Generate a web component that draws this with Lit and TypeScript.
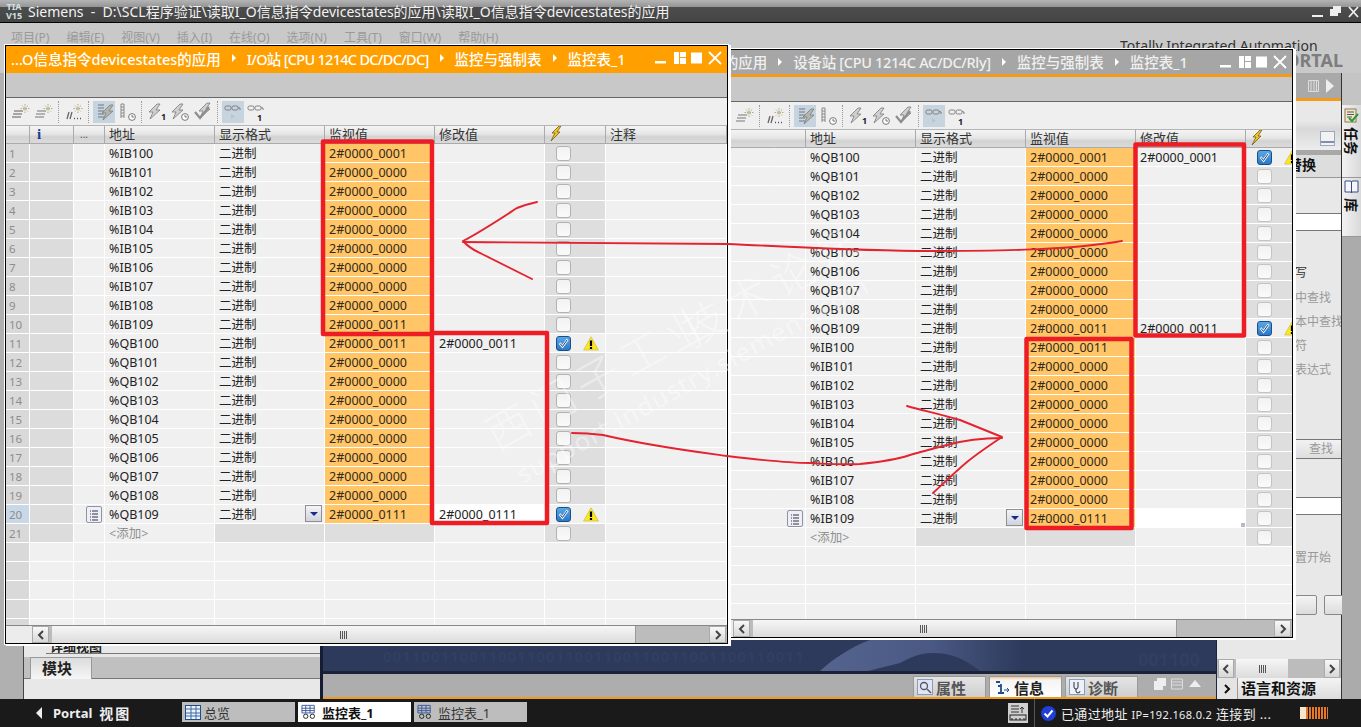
import { LitElement, css, html, svg } from 'lit'
import { classMap } from 'lit/directives/class-map.js'
import { customElement, property } from 'lit/decorators.js'

interface WatchRow {
  address: string
  value: string
  modify?: string
  forced?: boolean
  editing?: boolean
}

const ZERO = '2#0000_0000'

function buildRows(first: string, second: string, values: Record<number, string>, modify: Record<number, string>): WatchRow[] {
  const rows: WatchRow[] = []
  for (let i = 0; i < 20; i++) {
    const prefix = i < 10 ? first : second
    const m = modify[i]
    rows.push({
      address: `%${prefix}${100 + (i % 10)}`,
      value: values[i] ?? ZERO,
      modify: m,
      forced: !!m,
      editing: i === 19,
    })
  }
  return rows
}

const lightning = (x: number, y: number, c: string) =>
  svg`<path d="M${x + 8} ${y}L${x} ${y + 8}h4l-3 7L${x + 11} ${y + 6}h-4l4-6z" fill="${c}" stroke="#7c7c7c" stroke-width=".8"/>`

const spark = svg`<path d="M15 3v9M10.500 7.500h9M12 4.500l6 6M18 4.500l-6 6" stroke="#b5ad82" stroke-width="1" stroke-dasharray="1.500 1"/>`

const clock = svg`<circle cx="16" cy="16" r="3.400" fill="#fff" stroke="#777"/><path d="M16 14v2h2" fill="none" stroke="#555" stroke-width=".8"/>`

const glasses = svg`<rect x="3" y="5" width="6" height="4" rx="1.500" fill="none" stroke="#777" stroke-width=".9"/><rect x="10" y="5" width="6" height="4" rx="1.500" fill="none" stroke="#777" stroke-width=".9"/><path d="M16 6.500l2 .5v2" fill="none" stroke="#777" stroke-width=".9"/>`

const TOOL_ICONS = {
  monitorAll: svg`<path d="M4 10h9M3 13h9M2 16h9" stroke="#8f8f8f" stroke-width="1.600"/>${spark}`,
  monitorSel: svg`<path d="M4 10h9M3 13h9M2 16h9" stroke="#a0a0a0" stroke-width="1.600"/>${spark}`,
  restart: svg`<path d="M4 18l2-7M7 18l2-7" stroke="#666" stroke-width="1.300"/><path d="M11 17.500h1M14 17.500h1M17 17.500h1" stroke="#555" stroke-width="1.300"/>${spark}`,
  listBolt: svg`<path d="M5 4h6M5 7h6M5 10h6M5 13h6M5 16h6" stroke="#8a97a3" stroke-width="1.400"/>${lightning(9, 4, '#b4b6ac')}`,
  listClock: svg`<path d="M5 3v14M8 3v14M5 3h3M5 6h3M5 9h3M5 12h3M5 15h3" stroke="#888" fill="none"/>${clock}`,
  bolt1: svg`${lightning(3, 3, '#cfcfcf')}<text x="15" y="19" font-size="9" font-weight="700" fill="#222">1</text>`,
  boltClock: svg`${lightning(3, 3, '#cfcfcf')}${clock}`,
  boltCheck: svg`${lightning(7, 2, '#cfcfcf')}<path d="M3 11l5 6 9-11" fill="none" stroke="#8d8d8d" stroke-width="2.200"/>`,
  glassPlay: svg`${glasses}<path d="M9 13v5l4-2.500z" fill="#b8c4ce"/>`,
  glassOne: svg`${glasses}<text x="12" y="20" font-size="9" font-weight="700" fill="#222">1</text>`,
}

const toolIcon = (name: keyof typeof TOOL_ICONS, active = false) =>
  html`<span class=${classMap({ tool: true, active })}
    ><svg width="22" height="22" viewBox="0 0 22 22">${TOOL_ICONS[name]}</svg></span
  >`

@customElement('monitor-window')
export class MonitorWindow extends LitElement {
  static styles = css`
    :host {
      display: flex;
      flex-direction: column;
      box-sizing: border-box;
      border: 1px solid #000;
      box-shadow:
        0 0 0 1px #fff,
        2px 1px 0 1px #fff;
      background: #f0f0f0;
      overflow: hidden;
      color: #222;
    }
    .title {
      flex: none;
      box-sizing: border-box;
      height: 27px;
      display: flex;
      align-items: center;
      gap: 11px;
      padding: 0 0 3px 5px;
      background: #ff9f00;
      color: #fff;
      font-size: 14.5px;
      font-weight: 500;
      white-space: nowrap;
    }
    :host(.inactive) .title {
      background: #a6a6a6;
      border-bottom: 3px solid #f29a1a;
      color: #f0f0f0;
      padding-bottom: 1px;
    }
    .title .sub {
      letter-spacing: -0.7px;
    }
    :host(.inactive) .title .sub {
      letter-spacing: -0.33px;
    }
    .arrow {
      width: 0;
      height: 0;
      border-left: 4px solid #fff;
      border-top: 4px solid transparent;
      border-bottom: 4px solid transparent;
    }
    .controls {
      margin-left: auto;
      display: flex;
      gap: 5px;
      padding-right: 5px;
      align-items: center;
    }
    .controls svg {
      display: block;
    }
    .controls .min {
      margin-right: 2px;
    }
    .band {
      flex: none;
      height: 24px;
      background: #c8c8c8;
      border-bottom: 1px solid #666;
    }
    .toolbar {
      flex: none;
      height: 28px;
      display: flex;
      align-items: center;
      gap: 1px;
      padding-left: 4px;
      background: #efefef;
      border-bottom: 1px solid #b5b5b5;
      box-sizing: border-box;
    }
    .tool {
      width: 22px;
      height: 22px;
    }
    .tool.active {
      background: #c6d4e0;
    }
    .tool svg {
      display: block;
    }
    .tsep {
      width: 0;
      height: 22px;
      border-left: 1px dotted #999;
      margin: 0 3px 0 2px;
    }
    .grid {
      flex: 1;
      min-height: 0;
      overflow: hidden;
    }
    .row {
      display: grid;
      grid-template-columns: 24px 44px 31px 110px 110px 110px 110px 61px 121px;
      height: 19px;
      box-sizing: border-box;
      font-size: 12.5px;
      line-height: 18px;
    }
    .row > div {
      box-sizing: border-box;
      border-bottom: 1px solid #fff;
      border-right: 1px solid #fff;
      padding: 1px 0 0 4px;
      white-space: nowrap;
      overflow: hidden;
      display: flex;
      align-items: center;
    }
    .head {
      height: 18px;
      background: linear-gradient(#f4f4f4, #e6e6e6 45%, #d2d2d2 60%, #dcdcdc);
      font-size: 13px;
      color: #333;
    }
    .row.head > div {
      border-bottom: 1px solid #aaa;
      border-right: 1px solid #aaa;
      padding-top: 0;
      padding-bottom: 2px;
    }
    .row.head > .info {
      padding-left: 7px;
      color: #1c3d8f;
      font-weight: 700;
      font-family: 'Liberation Serif', serif;
      font-size: 15px;
    }
    .row.head > .dots {
      font-size: 10px;
      color: #555;
      padding-left: 6px;
    }
    :host(.inactive) .row.head > .info {
      color: transparent;
      border-right-color: transparent;
    }
    :host(.inactive) .row.head > .dots {
      color: transparent;
    }
    .row > .num {
      background: #d9d9d9;
      color: #8d8d8d;
      font-size: 11.5px;
      padding-left: 3px;
    }
    .num.current {
      background: #c9d8e6;
    }
    .diag {
      background: #dcdcdc;
    }
    .row.blank .diag {
      background: #f0f0f0;
    }
    .row > .diag {
      padding: 0;
    }
    :host(.inactive) .row > .diag {
      background: #f0f0f0;
      border-right-color: transparent;
    }
    .empty {
      background: #dedede;
    }
    .add {
      color: #909090;
    }
    .val {
      background: #ffc566;
      color: #33291a;
    }
    .mod {
      color: #222;
    }
    .mod.edit {
      background: #fff;
      position: relative;
    }
    .row.current-row .format {
      position: relative;
    }
    .row > .force {
      padding: 0 0 0 11px;
      gap: 12px;
      background: #dedede;
    }
    .row > .force.on {
      background: #f0f0f0;
    }
    .row.blank .force {
      background: #f0f0f0;
    }
    .box {
      flex: none;
      width: 15px;
      height: 15px;
      box-sizing: border-box;
      border: 1px solid #b3b3b3;
      border-radius: 3px;
      background: linear-gradient(#f2f2f2, #fafafa);
    }
    :host(.inactive) .box {
      border-color: #c4c4c4;
    }
    .box svg {
      display: block;
    }
    .box.on,
    :host(.inactive) .box.on {
      border: 1px solid #174f8c;
      background: linear-gradient(#5aa7e6, #2a78c8);
    }
    .warn {
      flex: none;
      display: block;
    }
    .drop {
      position: absolute;
      right: 2px;
      top: 0;
      width: 17px;
      height: 17px;
      box-sizing: border-box;
      border: 1px solid #8f8f8f;
      background: linear-gradient(#f5f5f5, #cfd3e0);
      display: flex;
      align-items: center;
      justify-content: center;
    }
    .drop::after {
      content: '';
      border-top: 4px solid #1a2a8a;
      border-left: 4px solid transparent;
      border-right: 4px solid transparent;
    }
    .pick {
      width: 16px;
      height: 17px;
      margin-left: 8px;
      box-sizing: border-box;
      border: 1px solid #8e93a8;
      border-radius: 2px;
      background: #eef0f6;
      display: flex;
      align-items: center;
      justify-content: center;
      flex: none;
    }
    .handle {
      position: absolute;
      right: 0;
      bottom: 0;
      width: 4px;
      height: 4px;
      background: #b8bcc8;
    }
    .scroll {
      flex: none;
      height: 18px;
      display: flex;
      background: #bcbcbc;
      border-top: 1px solid #888;
      box-sizing: border-box;
    }
    .scroll .pad {
      width: 26px;
      flex: none;
      background: #ececec;
    }
    .sbtn {
      flex: none;
      width: 17px;
      box-sizing: border-box;
      border: 1px solid #aaa;
      background: linear-gradient(#f8f8f8, #d8d8d8);
      display: flex;
      align-items: center;
      justify-content: center;
    }
    .thumb {
      flex: none;
      margin-left: 3px;
      box-sizing: border-box;
      border-right: 1px solid #999;
      background: linear-gradient(#f6f6f6, #dcdcdc);
      display: flex;
      align-items: center;
      justify-content: center;
    }
    .grip {
      width: 7px;
      height: 8px;
      background: repeating-linear-gradient(90deg, #555 0 1px, transparent 1px 2px);
    }
    .scroll .sbtn.end {
      margin-left: auto;
      margin-right: 1px;
    }
  `

  @property({ attribute: false }) titleParts: string[] = []
  @property({ attribute: false }) rows: WatchRow[] = []
  @property({ type: Number }) thumb = 584
  @property({ type: Number }) gripShift = 0

  private renderRow(r: WatchRow, i: number) {
    return html`<div class=${classMap({ row: true, 'current-row': !!r.editing })}>
      <div class=${classMap({ num: true, current: !!r.editing })}>${i + 1}</div>
      <div class="diag"></div>
      <div>
        ${r.editing
          ? html`<span class="pick"
              ><svg width="10" height="12" viewBox="0 0 10 12">
                <path d="M1 2h1M1 5h1M1 8h1M1 11h1M3 2h6M3 5h6M3 8h6M3 11h6" stroke="#334" fill="none" /></svg
            ></span>`
          : ''}
      </div>
      <div>${r.address}</div>
      <div class="format">二进制${r.editing ? html`<span class="drop"></span>` : ''}</div>
      <div class="val">${r.value}</div>
      <div class=${classMap({ mod: true, edit: !!r.editing })}>
        ${r.modify ?? ''}${r.editing && !r.modify ? html`<span class="handle"></span>` : ''}
      </div>
      <div class=${classMap({ force: true, on: !!r.forced })}>
        <span class=${classMap({ box: true, on: !!r.forced })}>
          ${r.forced
            ? html`<svg width="13" height="13" viewBox="0 0 13 13">
                <path d="M2.500 6l3 3.500 5-7" fill="none" stroke="#fff" stroke-width="2.400" />
                <path d="M3 6.500l2.500 3 4.500-6.500" fill="none" stroke="#123a7a" stroke-width="1" />
              </svg>`
            : ''}
        </span>
        ${r.forced
          ? html`<svg class="warn" width="16" height="15" viewBox="0 0 16 15">
              <path d="M8 .8L15.400 14H.6z" fill="#fbe81f" stroke="#d4c04a" stroke-width=".8" />
              <path d="M8 4.500v5.500M8 11v2" stroke="#000" stroke-width="2.200" />
            </svg>`
          : ''}
      </div>
      <div></div>
    </div>`
  }

  render() {
    const blanks = [21, 22, 23, 24, 25]
    return html`
      <div class="title">
        ${this.titleParts.map(
          (p, i) =>
            html`${i > 0 ? html`<span class="arrow"></span>` : ''}<span class=${classMap({ sub: i === 1 })}>${p}</span>`,
        )}
        <span class="controls">
          <svg class="min" width="12" height="12" viewBox="0 0 12 12"><rect x="0" y="9" width="11" height="2.500" fill="#fff" /></svg>
          <svg width="12" height="12" viewBox="0 0 12 12">
            <path d="M0 0h5v12H0zM6 0h6v5H6zM6 6h6v6H6z" fill="#fff" />
          </svg>
          <svg width="12" height="12" viewBox="0 0 12 12"><rect width="11" height="11" y=".5" fill="#fff" /></svg>
          <svg width="14" height="14" viewBox="0 0 14 14">
            <path d="M1 1l12 12M13 1L1 13" stroke="#fff" stroke-width="1.800" />
          </svg>
        </span>
      </div>
      <div class="band"></div>
      <div class="toolbar">
        ${toolIcon('monitorAll')}${toolIcon('monitorSel')}<span class="tsep"></span>${toolIcon('restart')}<span
          class="tsep"
        ></span
        >${toolIcon('listBolt', true)}${toolIcon('listClock')}<span class="tsep"></span>${toolIcon('bolt1')}${toolIcon(
          'boltClock',
        )}${toolIcon('boltCheck')}<span class="tsep"></span>${toolIcon('glassPlay', true)}${toolIcon('glassOne')}
      </div>
      <div class="row head">
        <div></div>
        <div class="info">i</div>
        <div class="dots">...</div>
        <div>地址</div>
        <div>显示格式</div>
        <div>监视值</div>
        <div>修改值</div>
        <div>
          <svg width="14" height="16" viewBox="0 0 14 16">
            <path d="M10 0L3 7h3l-4 8 9-9H8l4-6z" fill="#f5c518" stroke="#6b5a20" stroke-width=".8" />
          </svg>
        </div>
        <div>注释</div>
      </div>
      <div class="grid">
        ${this.rows.map((r, i) => this.renderRow(r, i))}
        <div class="row">
          <div class="num">21</div>
          <div class="diag"></div>
          <div></div>
          <div class="add">&lt;添加&gt;</div>
          <div class="empty"></div>
          <div class="empty"></div>
          <div></div>
          <div class="force"><span class="box"></span></div>
          <div></div>
        </div>
        ${blanks.map(
          () => html`<div class="row blank">
            <div class="num"></div>
            <div class="diag"></div>
            <div></div>
            <div></div>
            <div></div>
            <div></div>
            <div></div>
            <div class="force"></div>
            <div></div>
          </div>`,
        )}
      </div>
      <div class="scroll">
        <span class="pad"></span>
        <span class="sbtn"
          ><svg width="8" height="10" viewBox="0 0 8 10"><path d="M6 1L2 5l4 4" fill="none" stroke="#444" stroke-width="2" /></svg
        ></span>
        <span class="thumb" style="width:${this.thumb}px;padding-right:${this.gripShift}px"><span class="grip"></span></span>
        <span class="sbtn end"
          ><svg width="8" height="10" viewBox="0 0 8 10"><path d="M2 1l4 4-4 4" fill="none" stroke="#444" stroke-width="2" /></svg
        ></span>
      </div>
    `
  }
}

@customElement('app-root')
export class AppRoot extends LitElement {
  static styles = css`
    :host {
      display: block;
      position: relative;
      width: 1361px;
      height: 727px;
      overflow: hidden;
      font-family: 'Noto Sans', 'Noto Sans CJK SC', sans-serif;
      background: #b0b0b0;
    }
    .page {
      display: flex;
      flex-direction: column;
      height: 727px;
    }
    .appbar {
      flex: none;
      height: 23px;
      box-sizing: border-box;
      display: flex;
      align-items: center;
      padding: 7px 0 0 6px;
      background: linear-gradient(#b4b4b4 0, #949494 7px, #4d4d4d 7px, #444 22px);
      border-bottom: 1px solid #000;
      color: #f2f2f2;
      font-size: 14px;
      white-space: nowrap;
      position: relative;
    }
    .logo {
      position: absolute;
      left: 6px;
      top: 3px;
      width: 16px;
      line-height: 8.500px;
      font-size: 9px;
      font-weight: 700;
      color: #cfe0e4;
      text-align: center;
    }
    .apptitle {
      margin-left: 22px;
      margin-top: -8px;
    }
    .winbtns {
      position: absolute;
      right: 2px;
      top: 6px;
      display: flex;
      gap: 7px;
    }
    .top {
      flex: none;
      height: 50px;
      background: #c9c9c9;
      position: relative;
    }
    .menu {
      display: flex;
      gap: 17px;
      padding: 5px 0 0 11px;
      font-size: 12px;
      color: #9a9a9a;
    }
    .brand {
      position: absolute;
      left: 1120px;
      top: 13px;
      font-size: 14px;
      color: #333;
      white-space: nowrap;
    }
    .portal {
      position: absolute;
      right: 18px;
      top: 25px;
      font-size: 18px;
      font-weight: 700;
      color: #7d7d7d;
    }
    .work {
      flex: 1;
      min-height: 0;
      display: flex;
    }
    .rail {
      flex: none;
      width: 23px;
      background: #b0b0b0;
      border-right: 1px solid #444;
    }
    .editor {
      flex: none;
      width: 1192px;
      display: flex;
      flex-direction: column;
      justify-content: flex-end;
      background: #2d3a5c;
    }
    .lower {
      flex: none;
      height: 68px;
      display: flex;
    }
    .cards {
      flex: none;
      width: 296px;
      padding-top: 14px;
      background: #e8e8e8;
      border-right: 3px solid #151c33;
      box-sizing: content-box;
      height: 54px;
    }
    .cards .clip {
      height: 8px;
      overflow: hidden;
      border-bottom: 1px solid #777;
      margin-left: 22px;
      padding-left: 4px;
      font-size: 13px;
      font-weight: 700;
      line-height: 2px;
      color: #222;
    }
    .cards .tabs {
      margin-top: 3px;
      height: 21px;
      border-bottom: 1px solid #777;
      background: #c0c0c0;
    }
    .cards .tab {
      display: block;
      width: 62px;
      height: 22px;
      margin-left: 6px;
      box-sizing: border-box;
      background: linear-gradient(#dcdcdc, #f6f6f6);
      border: 1px solid #999;
      border-bottom: 0;
      padding-left: 11px;
      font-size: 15px;
      font-weight: 700;
      line-height: 20px;
      color: #222;
    }
    .stage {
      flex: 1;
      display: flex;
      flex-direction: column;
      min-width: 0;
    }
    .stage .art {
      flex: none;
      height: 40px;
      background: #2d3a5c;
      overflow: hidden;
    }
    .stage .art svg {
      display: block;
    }
    .stage .gap {
      height: 3px;
      background: #1c2338;
    }
    .insp {
      flex: 1;
      background: #adadad;
      border-bottom: 2px solid #f29a1a;
      display: flex;
      align-items: flex-end;
      padding-left: 590px;
      gap: 3px;
      position: relative;
    }
    .itab {
      width: 73px;
      height: 21px;
      box-sizing: border-box;
      display: flex;
      align-items: center;
      gap: 3px;
      padding-left: 3px;
      background: linear-gradient(#e4e4e4, #cfcfcf);
      border: 1px solid #999;
      border-bottom: 0;
      font-size: 15px;
      font-weight: 700;
      color: #555;
    }
    .itab.on {
      background: linear-gradient(#f5c78a 0, #f4f4f4 3px, #fff);
      color: #222;
    }
    .iicons {
      position: absolute;
      right: 14px;
      bottom: 7px;
      display: flex;
      gap: 5px;
    }
    .side {
      flex: none;
      width: 126px;
      background: #e8e8e8;
      border-left: 1px solid #1b2440;
      border-right: 1px solid #333;
      box-sizing: border-box;
      display: flex;
      flex-direction: column;
      font-size: 12px;
      color: #999;
    }
    .side .strip {
      flex: none;
      height: 25px;
      background: #a9a9a9;
      border-bottom: 3px solid #f29a1a;
      display: flex;
      align-items: center;
      justify-content: flex-end;
      gap: 6px;
      padding-right: 7px;
    }
    .side .tool-row {
      flex: none;
      height: 49px;
      display: flex;
      justify-content: flex-end;
      align-items: flex-end;
      padding: 0 6px 4px 0;
      box-sizing: border-box;
      background: linear-gradient(#e8e8e8 0 20px, #d8d8d8 28px, #ececec 48px);
    }
    .side .rule {
      flex: none;
      height: 5px;
      background: #a8a8a8;
    }
    .side .sechead {
      flex: none;
      height: 22px;
      background: #ddd;
      border-bottom: 1px solid #999;
      padding-left: 71px;
      color: #111;
      font-size: 14px;
      font-weight: 700;
      line-height: 19px;
      white-space: nowrap;
    }
    .side .input {
      flex: none;
      height: 16px;
      background: #fff;
      border-top: 1px solid #777;
      border-bottom: 1px solid #777;
      margin-top: 35px;
    }
    .side .opt {
      flex: none;
      height: 24px;
      line-height: 24px;
      padding-left: 78px;
      white-space: nowrap;
      overflow: hidden;
    }
    .side .opt.dark {
      height: 25px;
      color: #333;
      margin-top: 30px;
    }
    .side .find {
      flex: none;
      height: 18px;
      margin-top: 57px;
      border-top: 1px solid #777;
      border-bottom: 1px solid #777;
      line-height: 18px;
      text-align: right;
      padding-right: 8px;
      background: linear-gradient(#f2f2f2, #dedede);
    }
    .side .opt.start {
      margin-top: 31px;
    }
    .side .input.low {
      margin-top: 38px;
    }
    .side .btns {
      flex: none;
      display: flex;
      gap: 7px;
      padding-left: 78px;
      margin-top: 25px;
    }
    .side .btns span {
      flex: none;
      width: 20px;
      height: 18px;
      border: 1px solid #888;
      border-radius: 2px;
      background: linear-gradient(#f4f4f4, #dcdcdc);
    }
    .side .spacer {
      flex: 1;
    }
    .side .sscroll {
      flex: none;
      height: 19px;
      display: flex;
      padding: 0 1px;
      gap: 2px;
      background: #bcbcbc;
    }
    .sscroll .sb {
      flex: none;
      width: 16px;
      box-sizing: border-box;
      border: 1px solid #aaa;
      background: linear-gradient(#f8f8f8, #d8d8d8);
      display: flex;
      align-items: center;
      justify-content: center;
    }
    .sscroll .th {
      flex: none;
      width: 52px;
      background: linear-gradient(#f6f6f6, #dcdcdc);
      display: flex;
      align-items: center;
      justify-content: center;
    }
    .sscroll .gr {
      width: 7px;
      height: 8px;
      background: repeating-linear-gradient(90deg, #555 0 1px, transparent 1px 2px);
    }
    .sscroll .sb.end {
      margin-left: auto;
    }
    .side .lang {
      flex: none;
      height: 21px;
      display: flex;
      align-items: center;
      color: #111;
      font-size: 15px;
      font-weight: 700;
      background: #e4e4e4;
    }
    .lang .caret {
      width: 20px;
      display: flex;
      justify-content: center;
    }
    .lang .ltab {
      flex: 1;
      height: 21px;
      line-height: 20px;
      padding-left: 3px;
      background: linear-gradient(#f4f4f4, #dcdcdc);
      border-left: 1px solid #999;
    }
    .tasks {
      flex: none;
      width: 19px;
      background: #ababab;
      display: flex;
      flex-direction: column;
      color: #111;
      font-size: 14px;
      font-weight: 700;
    }
    .tasks .lead {
      flex: none;
      height: 32px;
      background: #c4c4c4;
    }
    .tasks .ttab {
      flex: none;
      writing-mode: vertical-rl;
      text-orientation: sideways;
      display: flex;
      align-items: center;
      background: linear-gradient(90deg, #f2f2f2, #d9d9d9);
      border-bottom: 1px solid #999;
      box-sizing: border-box;
      padding-top: 2px;
      gap: 4px;
      line-height: 19px;
    }
    .tasks .ttab svg {
      flex: none;
      display: block;
    }
    .tasks .ttab.one {
      height: 73px;
    }
    .tasks .ttab.two {
      height: 59px;
    }
    .status {
      flex: none;
      height: 28px;
      background: #1a1a1a;
      display: flex;
      align-items: center;
      color: #eee;
      font-size: 13px;
      white-space: nowrap;
    }
    .portalbtn {
      display: flex;
      align-items: center;
      width: 182px;
      box-sizing: border-box;
      padding-left: 36px;
      gap: 11px;
      font-weight: 700;
    }
    .portalbtn i {
      border-right: 6px solid #eee;
      border-top: 6px solid transparent;
      border-bottom: 6px solid transparent;
    }
    .portalbtn .zh {
      margin-left: -4px;
      font-size: 14px;
      letter-spacing: 2px;
    }
    .dtab {
      width: 113px;
      height: 20px;
      margin: 0 3px 2px 0;
      box-sizing: border-box;
      background: #bdbdbd;
      color: #333;
      display: flex;
      align-items: center;
      gap: 3px;
      padding-left: 3px;
      font-size: 13px;
    }
    .dtab.on {
      background: #fff;
      color: #111;
      font-weight: 700;
    }
    .dtab svg {
      display: block;
      flex: none;
    }
    .net {
      margin-left: auto;
      display: flex;
      align-items: center;
    }
    .net .dev {
      width: 20px;
      height: 20px;
      background: #d0d0d0;
      margin-right: 6px;
    }
    .net .dev svg,
    .net .ok {
      display: block;
    }
    .net .ok {
      margin-left: 3px;
    }
    .net .txt {
      margin-left: 5px;
      width: 239px;
      letter-spacing: 0.35px;
    }
    .net .txt small {
      font-size: 11px;
    }
    .net .sep {
      width: 1px;
      height: 28px;
      background: #555;
      margin-right: 3px;
    }
    .meter {
      width: 28px;
      height: 12px;
      margin-right: 33px;
      background: repeating-linear-gradient(90deg, #e8772a 0 2px, #1a1a1a 2px 3px);
    }
    .meter::before {
      content: '';
      display: block;
      width: 6px;
      height: 12px;
      background: #f5e6d0;
    }
    monitor-window {
      position: absolute;
    }
    .front {
      left: 5px;
      top: 45px;
      width: 723px;
      height: 599px;
    }
    .back {
      left: 706px;
      top: 49px;
      width: 587px;
      height: 589px;
    }
    .marks {
      position: absolute;
      left: 0;
      top: 0;
      pointer-events: none;
    }
  `

  private frontRows = buildRows(
    'IB',
    'QB',
    { 0: '2#0000_0001', 9: '2#0000_0011', 10: '2#0000_0011', 19: '2#0000_0111' },
    { 10: '2#0000_0011', 19: '2#0000_0111' },
  )

  private backRows = buildRows(
    'QB',
    'IB',
    { 0: '2#0000_0001', 9: '2#0000_0011', 10: '2#0000_0011', 19: '2#0000_0111' },
    { 0: '2#0000_0001', 9: '2#0000_0011' },
  )

  render() {
    return html`
      <div class="page">
        <div class="appbar">
          <span class="logo">TIA<br />V15</span>
          <span class="apptitle">Siemens &nbsp;- &nbsp;D:\\SCL程序验证\\读取I_O信息指令devicestates的应用\\读取I_O信息指令devicestates的应用</span>
          <span class="winbtns">
            <svg width="11" height="12" viewBox="0 0 11 12"><rect y="9" width="11" height="2" fill="#eee" /></svg>
            <svg width="11" height="12" viewBox="0 0 11 12"><path d="M3 0h8v7H8v3H0V3h3z" fill="#eee" /></svg>
            <svg width="11" height="12" viewBox="0 0 11 12"><path d="M1 1l9 10M10 1L1 11" stroke="#eee" stroke-width="1.800" /></svg>
          </span>
        </div>
        <div class="top">
          <div class="menu">
            <span>项目(P)</span><span>编辑(E)</span><span>视图(V)</span><span>插入(I)</span><span>在线(O)</span
            ><span>选项(N)</span><span>工具(T)</span><span>窗口(W)</span><span>帮助(H)</span>
          </div>
          <span class="brand">Totally Integrated Automation</span>
          <span class="portal">PORTAL</span>
        </div>
        <div class="work">
          <div class="rail"></div>
          <div class="editor">
            <div class="lower">
              <div class="cards">
                <div class="clip">详细视图</div>
                <div class="tabs"><span class="tab">模块</span></div>
              </div>
              <div class="stage">
                <div class="art">
                  <svg width="893" height="40" viewBox="0 0 893 40">
                    <defs>
                      <linearGradient id="sweep" x1="0" x2="1">
                        <stop offset="0" stop-color="#55648f" />
                        <stop offset=".55" stop-color="#4a5984" />
                        <stop offset="1" stop-color="#2d3a5c" />
                      </linearGradient>
                    </defs>
                    <path d="M497 40C510 28 528 16 547 9H700V40H657C640 26 625 22 610 22C595 22 585 28 577 32L545 40z" fill="url(#sweep)" />
                    <text x="60" y="31" font-size="15" font-weight="700" fill="#323f62" letter-spacing="1">00110011001100110011001100110011001100110011</text>
                    <text x="815" y="35" font-size="18" font-weight="700" fill="#333f62">001100</text>
                  </svg>
                </div>
                <div class="gap"></div>
                <div class="insp">
                  <span class="itab"
                    ><svg width="16" height="16" viewBox="0 0 16 16">
                      <rect x=".5" y=".5" width="15" height="15" fill="#dfe6f2" stroke="#8a9ac0" />
                      <circle cx="7" cy="7" r="3.500" fill="none" stroke="#556" stroke-width="1.300" />
                      <path d="M10 10l4 4" stroke="#556" stroke-width="1.500" /></svg
                    >属性</span
                  >
                  <span class="itab on"
                    ><svg width="18" height="16" viewBox="0 0 18 16">
                      <path d="M3 3h4M8 5v9M5 7h3M5 14h6" stroke="#1c4f8f" stroke-width="1.800" fill="none" />
                      <path d="M11 11h5l-2-2M16 11l-2 2" stroke="#1c4f8f" fill="none" /></svg
                    >信息</span
                  >
                  <span class="itab"
                    ><svg width="16" height="16" viewBox="0 0 16 16">
                      <rect x=".5" y=".5" width="15" height="15" fill="#eef1f6" stroke="#8a9ac0" />
                      <path d="M5 3v5a2 2 0 0 0 4 0V3M7 10v2a2 2 0 0 0 4 0" fill="none" stroke="#234" /></svg
                    >诊断</span
                  >
                  <span class="iicons">
                    <svg width="12" height="12" viewBox="0 0 12 12"><path d="M3 0h9v8H9v4H0V3h3z" fill="#eee" /></svg>
                    <svg width="12" height="12" viewBox="0 0 12 12"><path d="M.5 1h11v10H.5zM.5 4h11M.5 7h11" fill="none" stroke="#ddd" /></svg>
                    <svg width="14" height="12" viewBox="0 0 14 12"><path d="M7 2l6 7H1z" fill="#eee" /></svg>
                  </span>
                </div>
              </div>
            </div>
          </div>
          <div class="side">
            <div class="strip">
              <svg width="11" height="12" viewBox="0 0 11 12"><path d="M.5 .5h10v11H.5zM3 .5v11M6 .5v11M8.500 .5v11" fill="none" stroke="#ddd" /></svg>
              <svg width="9" height="14" viewBox="0 0 9 14"><path d="M1 0l8 7-8 7z" fill="#eee" /></svg>
            </div>
            <div class="tool-row">
              <svg width="15" height="15" viewBox="0 0 15 15">
                <rect x=".5" y=".5" width="14" height="14" fill="#f2f2f2" stroke="#9aa6c4" />
                <path d="M1 11h13" stroke="#7f8db0" stroke-width="2" />
              </svg>
            </div>
            <div class="rule"></div>
            <div class="sechead">替换</div>
            <div class="input"></div>
            <div class="opt dark">写</div>
            <div class="opt">中查找</div>
            <div class="opt">本中查找</div>
            <div class="opt">符</div>
            <div class="opt">表达式</div>
            <div class="find">查找</div>
            <div class="input low"></div>
            <div class="opt start">置开始</div>
            <div class="btns"><span></span><span></span></div>
            <div class="spacer"></div>
            <div class="sscroll">
              <span class="sb"><svg width="8" height="10" viewBox="0 0 8 10"><path d="M6 1L2 5l4 4" fill="none" stroke="#444" stroke-width="2" /></svg></span>
              <span class="th"><span class="gr"></span></span>
              <span class="sb end"><svg width="8" height="10" viewBox="0 0 8 10"><path d="M2 1l4 4-4 4" fill="none" stroke="#444" stroke-width="2" /></svg></span>
            </div>
            <div class="lang">
              <span class="caret"><svg width="8" height="10" viewBox="0 0 8 10"><path d="M2 1l4 4-4 4" fill="none" stroke="#111" stroke-width="2" /></svg></span>
              <span class="ltab">语言和资源</span>
            </div>
          </div>
          <div class="tasks">
            <div class="lead"></div>
            <div class="ttab one">
              <svg width="15" height="16" viewBox="0 0 15 16">
                <rect x="1" y="2" width="11" height="13" fill="#f3e6c8" stroke="#8a7a50" />
                <path d="M3 5h7M3 7.500h7M3 10h5" stroke="#556" />
                <path d="M5 11l3 3 6-7" fill="none" stroke="#2a9a3a" stroke-width="2" />
              </svg>
              任务
            </div>
            <div class="ttab two">
              <svg width="15" height="14" viewBox="0 0 15 14">
                <path d="M1 1h6l.5 1L8 1h6v11H8l-.5 1L7 12H1zM7.500 2v10" fill="#f4f6fb" stroke="#3a4c88" />
              </svg>
              库
            </div>
          </div>
        </div>
        <div class="status">
          <div class="portalbtn"><i></i><span>Portal</span><span class="zh">视图</span></div>
          <div class="dtab">
            <svg width="16" height="15" viewBox="0 0 16 15">
              <rect x=".5" y=".5" width="15" height="14" fill="#eef2f8" stroke="#1c4f8f" />
              <path d="M1 4h14M1 8h14M1 11h14M6 1v13M11 1v13" stroke="#3a6aa8" />
            </svg>
            总览
          </div>
          <div class="dtab on">
            <svg width="18" height="16" viewBox="0 0 19 16">
              <path d="M1 1h13v8H1zM1 4h13M1 6.500h13M5 1v8M9.500 1v8" fill="none" stroke="#3a5aa0" />
              <circle cx="5" cy="12.500" r="2.300" fill="none" stroke="#222" />
              <circle cx="12" cy="12.500" r="2.300" fill="none" stroke="#222" />
            </svg>
            监控表_1
          </div>
          <div class="dtab">
            <svg width="18" height="16" viewBox="0 0 19 16">
              <path d="M1 1h13v8H1zM1 4h13M1 6.500h13M5 1v8M9.500 1v8" fill="none" stroke="#3a5aa0" />
              <circle cx="5" cy="12.500" r="2.300" fill="none" stroke="#222" />
              <circle cx="12" cy="12.500" r="2.300" fill="none" stroke="#222" />
            </svg>
            监控表_1
          </div>
          <div class="net">
            <span class="dev">
              <svg width="20" height="20" viewBox="0 0 20 20">
                <path d="M3 3h8M3 6h8M3 9h8M14 4v6M12 6l2-2 2 2" stroke="#333" fill="none" />
                <rect x="2" y="12" width="16" height="5" fill="none" stroke="#222" />
                <path d="M4 17v-2M8 17v-2M12 17v-2M16 17v-2" stroke="#222" />
              </svg>
            </span>
            <span class="sep"></span>
            <svg class="ok" width="15" height="15" viewBox="0 0 15 15">
              <circle cx="7.500" cy="7.500" r="7.500" fill="#1f3fd8" />
              <path d="M3.500 7.500l3 3 5-6" fill="none" stroke="#fff" stroke-width="2" />
            </svg>
            <span class="txt">已通过地址 <small>IP=192.168.0.2</small> 连接到 ...</span>
            <span class="meter"></span>
          </div>
        </div>
      </div>

      <monitor-window
        class="back inactive"
        .titleParts=${['...的应用', '设备站 [CPU 1214C AC/DC/Rly]', '监控与强制表', '监控表_1']}
        .rows=${this.backRows}
        .thumb=${424}
        .gripShift=${82}
      ></monitor-window>
      <monitor-window
        class="front"
        .titleParts=${['...O信息指令devicestates的应用', 'I/O站 [CPU 1214C DC/DC/DC]', '监控与强制表', '监控表_1']}
        .rows=${this.frontRows}
      ></monitor-window>

      <svg class="marks" width="1361" height="727" viewBox="0 0 1361 727">
        <g fill="#fff" fill-opacity=".42" font-family="'Noto Sans CJK SC', sans-serif">
          <text transform="translate(497 452) rotate(-29)" font-size="44" letter-spacing="7" font-weight="300">西门子工业</text>
          <text transform="translate(692 348) rotate(-29)" font-size="44" letter-spacing="7" font-weight="300">技术论坛</text>
          <text transform="translate(523 484) rotate(-29)" font-size="25" letter-spacing="1.500" font-family="'Noto Sans', sans-serif">support.industry.siemens.com</text>
        </g>
        <g fill="none" stroke="#ee1c25" stroke-width="4.500" stroke-linejoin="round">
          <rect x="323" y="141.500" width="109" height="192.500" />
          <rect x="432" y="333" width="115" height="190" />
          <rect x="1135.500" y="144.500" width="108.500" height="191" />
          <rect x="1026.500" y="339" width="105" height="189" />
        </g>
        <g fill="none" stroke="#e32330" stroke-width="1.900" stroke-linecap="round" stroke-linejoin="round">
          <path d="M537 202C528 204 522 206 517 208C500 219 482 231 463 241C470 249 476 251 482 254L532 279" />
          <path d="M463 242C560 243 660 243 727 244C800 247 860 251 930 251C1000 251 1070 250 1122 241" />
          <path d="M572 433C585 433 595 434 603 435C650 446 690 451 727 456C760 460 790 463 810 463C830 464 845 465 860 464C880 462 895 460 910 455C925 451 935 448 947 445C965 440 985 438 1002 438" />
          <path d="M907 406C925 411 940 414 960 420C975 426 990 432 1002 437C990 445 978 453 967 462C955 472 943 484 933 493" />
        </g>
      </svg>
    `
  }
}

declare global {
  interface HTMLElementTagNameMap {
    'app-root': AppRoot
    'monitor-window': MonitorWindow
  }
}
